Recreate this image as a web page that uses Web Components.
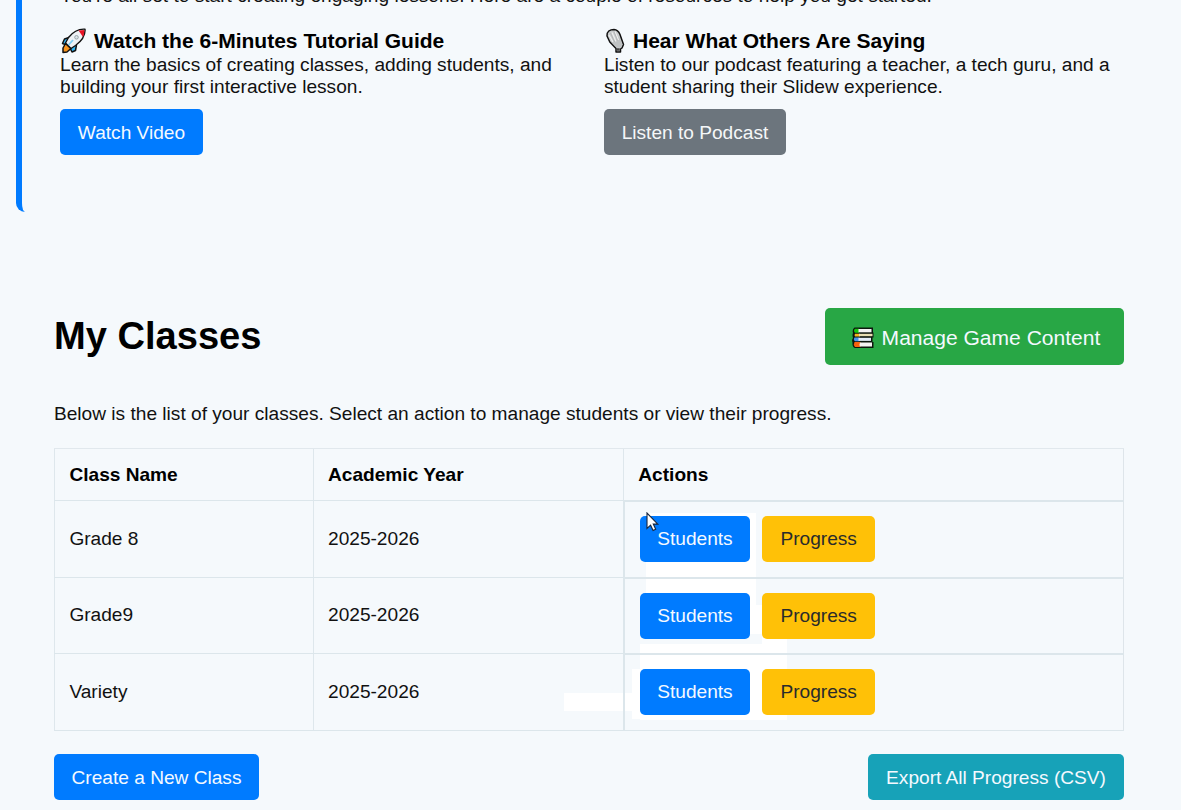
<!DOCTYPE html>
<html lang="en">
<head>
<meta charset="utf-8">
<title>My Classes</title>
<style>
html,body{margin:0;padding:0}
body{height:810px;overflow:hidden;background:#f5f9fc;color:#111;font:19.11px/22px "Liberation Sans",Arial,sans-serif}
</style>
</head>
<body>
<dashboard-page></dashboard-page>
<script>
const define = (name, html, setup) => customElements.define(name, class extends HTMLElement {
  connectedCallback() {
    if (this.shadowRoot) return;
    const t = document.createElement('template');
    t.innerHTML = html;
    this.attachShadow({mode:'open'}).append(t.content.cloneNode(true));
    if (setup) setup(this, this.shadowRoot);
  }
});

define('action-button', `<style>
:host{display:inline-flex;box-sizing:border-box;width:var(--w);height:46px;border-radius:5px;align-items:center;justify-content:center;background:#007bff;color:#f4f9ff;white-space:nowrap;flex:none;padding-top:var(--drop,1px)}
:host([variant=secondary]){background:#6c757d;color:#f5f7f8}
:host([variant=warning]){background:#ffc107;color:#292b2c}
:host([variant=info]){background:#17a2b8}
:host([variant=success]){background:#28a745;height:57px;font-size:21.05px;padding:3px 0 0 3px}
span{display:flex;align-items:center}
</style><span><slot name="icon"></slot><slot></slot></span>`);

define('rocket-icon', `<style>:host{display:block;width:26px;height:26px;flex:none}svg{display:block}</style>
<svg width="26" height="26" viewBox="0 0 26 26" stroke-linejoin="round">
<path d="M9 9.500l-4.500 1.500-2 4.500 4 1.500M16.500 17l-1 5.500-3.500 1.500-2-4" fill="#30b4f3" stroke="#111" stroke-width="1.500"/>
<path d="M5.500 15.500L3 20v4.500l4-.5 4-3.500z" fill="#f7941e" stroke="#111" stroke-width="1.500"/>
<path d="M25 1.200C25.500 8 21 13.500 15.500 17.500l-4.500 3L5.500 15l3-5.500C12.500 4.500 18 .700 25 1.200z" fill="#eef1f5" stroke="#111" stroke-width="1.400"/>
<path d="M18.500 2.400l5.800-.4c.1 2.700-.2 4.700-1.300 7z" fill="#e81224"/>
<circle cx="16.500" cy="9.300" r="1.800" fill="#dbe4e8" stroke="#8c969d" stroke-width=".8"/>
<path d="M8.500 17l4.500-5" stroke="#7ccdf5" stroke-width="1.800"/></svg>`);

define('microphone-icon', `<style>:host{display:block;width:21px;height:26px;flex:none}svg{display:block}</style>
<svg width="21" height="26" viewBox="0 0 21 26" stroke-linejoin="round">
<path d="M3 8C2.500 3.500 6 1.400 10 1.400c3 .1 4.600 1.600 5.900 4.800L19.500 16.500l-1.500 3.500-1.500 1V24h-4.500v-3.500L5.800 14z" fill="#c9cccd" stroke="#111" stroke-width="1.500"/>
<path d="M15.300 9l3 7.500-1.300 3h-4.200L8 14.500z" fill="#bfc2c3"/>
<path d="M5 7l4 7M8 4.500l4 9M11 3.500l3.500 8.500" stroke="#eeefef" stroke-width="1.200"/>
<path d="M6.500 5l4 9M10 3.500l3.500 9" fill="none" stroke="#a2a5a7" stroke-width=".6"/>
<path d="M12.700 21.500h3" stroke="#444" stroke-width="2.500"/></svg>`);

define('books-icon', `<style>:host{display:block;width:22px;height:22px;flex:none}svg{display:block}</style>
<svg width="22" height="22" viewBox="0 0 22 22">
<path d="M2.500.5H21V5.500h.5v5H20.500v4.500h1v6H3Q0 20 .5 15.500-.5 13 1 11 0 8 1 6 0 2 2.500.5z" fill="#0c160d"/>
<path d="M3 1.800h4v3.900H3q-2-2 0-3.900z" fill="#16c60c"/><path d="M6.500 2h13v3.300H6.500z" fill="#f3f3f3"/>
<path d="M3 6.700h5v2.800H3q-1-1.400 0-2.800z" fill="#f7b51e"/><path d="M7 6.800h13.500v2.400H7z" fill="#e8dfb2"/>
<path d="M2.500 10.500h5v3.700H3q-2-1.500-.5-3.700z" fill="#4894ed"/><path d="M6.500 10.800h12.500v3.100H6.500z" fill="#e3edf8"/>
<path d="M2.500 15.100h6v5H3q-2-2.500-.5-5z" fill="#f7630c"/><path d="M8 15.400h12v4.200H8q-1-2 0-4.200z" fill="#f5f3f2"/></svg>`);

define('resource-card', `<style>
:host{display:block}
h2{display:flex;align-items:center;gap:8px;margin:0;height:27px;font-size:21.03px;line-height:26px;color:#000;white-space:nowrap}
b{padding-top:1px}
p{margin:0 0 11px;white-space:nowrap;line-height:22px}
</style><h2><slot name="icon"></slot><b><slot name="title"></slot></b></h2><p><slot></slot></p><slot name="action"></slot>`);

define('welcome-banner', `<style>
:host{display:flow-root;box-sizing:border-box;height:212px;margin-left:16px;padding-left:38px;border-left:6px solid #007bff;border-bottom-left-radius:9px}
.intro{display:flow-root;height:27px;line-height:22px;white-space:nowrap}
.intro span{display:block;margin-top:-15px}
.cards{display:grid;grid-template-columns:544px 1fr}
</style><div class="intro"><span><slot name="intro"></slot></span></div><div class="cards"><slot></slot></div>`);

define('mouse-pointer', `<style>:host{display:block;width:14px;height:21px}svg{display:block}</style>
<svg width="14" height="21" viewBox="0 0 14 21"><path d="M1 1v15.500l3.600-3.300 2.500 5.300 2.600-1.200-2.400-5.200h4.500z" fill="#fff" stroke="#16253c" stroke-width="1.100"/></svg>`);

define('class-row', `<style>
:host{display:grid;grid-template-columns:259px 310px 1fr;box-sizing:border-box;height:var(--row,76.600px);border-bottom:1px solid #dce6eb}
div{box-sizing:border-box;display:flex;align-items:center;padding-left:14.400px;border-left:1px solid #dee7ec;white-space:nowrap}
div+div{padding-left:14px}
.last{gap:12px;border-right:1px solid #dee5ea}
:host([head]) .last{padding-left:14.300px}
:host(:not([head])) .last{border-left:2px solid #dce6eb;border-top:1px solid #dce6eb;padding-left:14.700px}
:host([head]){--row:52px;font-weight:700;color:#000}
</style><div><slot name="name"></slot></div><div><slot name="year"></slot></div><div class="last"><slot></slot></div>`);

define('class-table', `<style>
:host{display:block;position:relative;isolation:isolate;border-top:1px solid #e1e8ed;height:281px}
i{position:absolute;z-index:-1;background:#fff}
mouse-pointer{position:absolute;left:592px;top:63px;z-index:2}
action-button{--w:110.500px;--drop:0px}
action-button[variant]{--w:113px}
</style>
<i style="left:592px;top:64px;width:110px;height:92px"></i>
<i style="left:592px;top:156px;width:116px;height:29px"></i>
<i style="left:708px;top:185px;width:25px;height:11px"></i>
<i style="left:586px;top:195px;width:147px;height:76px"></i>
<i style="left:578px;top:220px;width:9px;height:50px"></i>
<i style="left:510px;top:244px;width:69px;height:18px"></i>
<class-row head><span slot="name">Class Name</span><span slot="year">Academic Year</span>Actions</class-row>
<div id="rows"></div><mouse-pointer></mouse-pointer>`, (el, root) => {
  root.querySelector('#rows').innerHTML = ['Grade 8','Grade9','Variety'].map(name =>
    `<class-row><span slot="name">${name}</span><span slot="year">2025-2026</span><action-button>Students</action-button><action-button variant="warning">Progress</action-button></class-row>`).join('');
});

define('dashboard-page', `<style>
:host{display:block;height:810px;overflow:hidden}
main{width:1070px;margin:96px 0 0 54px}
header,footer{display:flex;justify-content:space-between}
h1{margin:0;font-size:38.100px;line-height:56px;color:#000}
p{margin:38px 0 23px;line-height:22px}
footer{margin-top:24px}
books-icon{margin-right:8px}
</style>
<welcome-banner><span slot="intro">You're all set to start creating engaging lessons. Here are a couple of resources to help you get started.</span>
<resource-card><rocket-icon slot="icon"></rocket-icon><span slot="title">Watch the 6-Minutes Tutorial Guide</span>Learn the basics of creating classes, adding students, and<br>building your first interactive lesson.<action-button slot="action" style="--w:143px">Watch Video</action-button></resource-card>
<resource-card><microphone-icon slot="icon"></microphone-icon><span slot="title">Hear What Others Are Saying</span>Listen to our podcast featuring a teacher, a tech guru, and a<br>student sharing their Slidew experience.<action-button slot="action" variant="secondary" style="--w:182px">Listen to Podcast</action-button></resource-card>
</welcome-banner>
<main><header><h1>My Classes</h1><action-button variant="success" style="--w:299px"><books-icon slot="icon"></books-icon>Manage Game Content</action-button></header>
<p>Below is the list of your classes. Select an action to manage students or view their progress.</p>
<class-table></class-table>
<footer><action-button style="--w:205px">Create a New Class</action-button><action-button variant="info" style="--w:256px">Export All Progress (CSV)</action-button></footer></main>`);
</script>
</body>
</html>
